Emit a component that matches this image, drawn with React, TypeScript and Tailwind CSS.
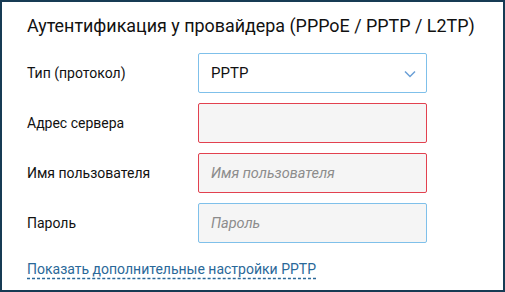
const Field = ({ label, children }: { label: string; children: React.ReactNode }) => (
  <div className="flex items-center">
    <label className="w-[171px] shrink-0 text-[14px] text-[#111]">{label}</label>
    {children}
  </div>
);

export default function App() {
  const input =
    'h-10 w-[229px] rounded-[2px] border bg-[#f5f5f5] px-3 text-[14.5px] italic outline-none placeholder:text-[#8c8c8c]';

  return (
    <div
      className="h-[292px] w-[505px] border-2 border-[#173b54] bg-white pl-[25px] pt-[12px]"
      style={{ fontFamily: 'Roboto, sans-serif' }}
    >
      <h1 className="text-[17.9px] leading-6 text-[#111]">Аутентификация у провайдера (PPPoE / PPTP / L2TP)</h1>
      <div className="mt-[15px] flex flex-col gap-[10px]">
        <Field label="Тип (протокол)">
          <div className="flex h-10 w-[229px] items-center justify-between rounded-[2px] border border-[#7fc0ea] bg-white pl-3 pr-[10px]">
            <span className="text-[15px] text-[#111]">PPTP</span>
            <svg width="12" height="8" viewBox="0 0 12 8" fill="none" className="mt-[2px]">
              <path d="M1 1.5 6 6.5 11 1.5" stroke="#6a9fd6" strokeWidth="1.5" />
            </svg>
          </div>
        </Field>
        <Field label="Адрес сервера">
          <input className={`${input} border-[#e2414f]`} />
        </Field>
        <Field label="Имя пользователя">
          <input className={`${input} border-[#e2414f]`} placeholder="Имя пользователя" />
        </Field>
        <Field label="Пароль">
          <input className={`${input} border-[#7fc0ea]`} placeholder="Пароль" />
        </Field>
      </div>
      <a
        href="#"
        className="mt-[16px] inline-block text-[14px] text-[#2a6899] underline decoration-dashed decoration-[#2a6899] underline-offset-[4px]"
      >
        Показать дополнительные настройки PPTP
      </a>
    </div>
  );
}
